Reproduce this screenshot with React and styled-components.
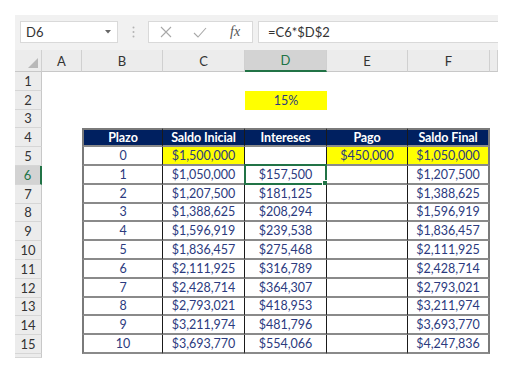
import React from 'react';
import styled, { createGlobalStyle } from 'styled-components';

const Global = createGlobalStyle`
  body {
    margin: 0;
    background: #fff;
    font-family: Lato, "Liberation Sans", sans-serif;
  }
`

const Page = styled.div`
  padding: 15px 0 0 15px;
  width: 483px;
`

const Toolbar = styled.div`
  display: flex;
  align-items: flex-start;
  height: 35px;
  box-sizing: border-box;
  padding: 6px 0 0 5px;
  background: #f1f1f1;
`

const NameBox = styled.div`
  width: 98px;
  height: 22px;
  box-sizing: border-box;
  display: flex;
  align-items: center;
  justify-content: space-between;
  padding: 0 6px 0 5px;
  background: #fff;
  border: 1px solid #d9d9d9;
  font-size: 13px;
  color: #333;
`

const Grip = styled.div`
  width: 30px;
  height: 22px;
  display: flex;
  align-items: center;
  justify-content: center;
`

const FxBox = styled.div`
  width: 105px;
  height: 22px;
  box-sizing: border-box;
  display: flex;
  align-items: center;
  padding-left: 11px;
  gap: 21px;
  background: #fff;
  border: 1px solid #d9d9d9;
`

const Fx = styled.span`
  font-family: "Liberation Serif", serif;
  font-style: italic;
  font-size: 14px;
  color: #555;
  margin-left: 2px;
`

const Formula = styled.div`
  flex-grow: 1;
  margin-left: 5px;
  height: 22px;
  box-sizing: border-box;
  display: flex;
  align-items: center;
  padding-left: 9px;
  background: #fff;
  border: 1px solid #d9d9d9;
  border-right: none;
  font-size: 13px;
  color: #333;
`

const Sheet = styled.div`
  display: grid;
  grid-template-columns: 27px 40px 81px 82px 82px 81px 82px 8px;
  grid-template-rows: 22px repeat(15, 18.8px) 4px;
  font-size: 12.5px;
`

const Corner = styled.div`
  background: #ececec;
  border-right: 1px solid #d0d0d0;
  border-bottom: 1px solid #c8c8c8;
  display: flex;
  align-items: flex-end;
  justify-content: flex-end;
  padding: 0 3px 3px 0;
`

const ColHead = styled.div`
  display: flex;
  align-items: center;
  justify-content: center;
  box-sizing: border-box;
  background: ${p => (p.$active ? '#d3d3d3' : '#ececec')};
  color: ${p => (p.$active ? '#217346' : '#333')};
  border-right: 1px solid #d0d0d0;
  border-bottom: ${p => (p.$active ? '2px solid #217346' : '1px solid #c8c8c8')};
  font-size: 13px;
`

const RowHead = styled.div`
  display: flex;
  align-items: center;
  justify-content: center;
  box-sizing: border-box;
  background: ${p => (p.$active ? '#d3d3d3' : '#ececec')};
  color: ${p => (p.$active ? '#217346' : '#333')};
  border-right: ${p => (p.$active ? '2px solid #217346' : '1px solid #c8c8c8')};
  border-bottom: 1px solid #d6d6d6;
  font-size: 13px;
`

const Blank = styled.div`
  display: flex;
  align-items: center;
  justify-content: center;
  background: ${p => p.$bg || '#fff'};
  color: #2b3a7e;
`

const TCell = styled.div`
  position: relative;
  display: flex;
  align-items: center;
  justify-content: center;
  box-sizing: border-box;
  background: ${p => (p.$head ? '#002060' : p.$yellow ? '#ffff00' : '#fff')};
  color: ${p => (p.$head ? '#fff' : '#2b3a7e')};
  font-weight: ${p => (p.$head ? 700 : 400)};
  letter-spacing: ${p => (p.$head ? '-0.1px' : '0')};
  border-right: 1px solid ${p => (p.$last ? '#7a7a7a' : '#1a1a1a')};
  border-bottom: 2px solid #8a8a8a;
  border-left: ${p => (p.$first ? '2px solid #7a7a7a' : 'none')};
  border-top: ${p => (p.$head ? '2px solid #7a7a7a' : 'none')};
  ${p => p.$last && 'border-right-width: 2px;'}
`

const Selection = styled.div`
  position: absolute;
  left: -1px;
  top: -2px;
  right: -1px;
  bottom: -2px;
  border: 2px solid #217346;
`

const Handle = styled.div`
  position: absolute;
  right: -4px;
  bottom: -4px;
  width: 5px;
  height: 5px;
  background: #217346;
  border: 1px solid #fff;
`

const headers = ['Plazo', 'Saldo Inicial', 'Intereses', 'Pago', 'Saldo Final'];

const data = [
  ['0', '$1,500,000', '', '$450,000', '$1,050,000'],
  ['1', '$1,050,000', '$157,500', '', '$1,207,500'],
  ['2', '$1,207,500', '$181,125', '', '$1,388,625'],
  ['3', '$1,388,625', '$208,294', '', '$1,596,919'],
  ['4', '$1,596,919', '$239,538', '', '$1,836,457'],
  ['5', '$1,836,457', '$275,468', '', '$2,111,925'],
  ['6', '$2,111,925', '$316,789', '', '$2,428,714'],
  ['7', '$2,428,714', '$364,307', '', '$2,793,021'],
  ['8', '$2,793,021', '$418,953', '', '$3,211,974'],
  ['9', '$3,211,974', '$481,796', '', '$3,693,770'],
  ['10', '$3,693,770', '$554,066', '', '$4,247,836'],
];

const yellowRow0 = [false, true, false, true, true];

function renderRow(r) {
  const cells = [<RowHead key="h" $active={r === 6}>{r}</RowHead>, <Blank key="a" />];
  if (r === 2) {
    cells.push(<Blank key="b" />, <Blank key="c" />, <Blank key="d" $bg="#ffff00">15%</Blank>, <Blank key="e" />, <Blank key="f" />);
  } else if (r === 4) {
    headers.forEach((h, i) => cells.push(
      <TCell key={h} $head $first={i === 0} $last={i === 4}>{h}</TCell>
    ));
  } else if (r >= 5) {
    data[r - 5].forEach((v, i) => cells.push(
      <TCell key={i} $first={i === 0} $last={i === 4} $yellow={r === 5 && yellowRow0[i]}>
        {v}
        {r === 6 && i === 2 && (
          <Selection>
            <Handle />
          </Selection>
        )}
      </TCell>
    ));
  } else {
    ['b', 'c', 'd', 'e', 'f'].forEach(k => cells.push(<Blank key={k} />));
  }
  cells.push(<Blank key="g" />);
  return cells;
}

export default function App() {
  const rows = Array.from({ length: 15 }, (_, i) => i + 1);
  return (
    <Page>
      <Global />
      <Toolbar>
        <NameBox>
          <span>D6</span>
          <svg width="6" height="4" viewBox="0 0 6 4"><path d="M0 0h6L3 3.5z" fill="#666" /></svg>
        </NameBox>
        <Grip>
          <svg width="3" height="12" viewBox="0 0 3 12">
            <circle cx="1.5" cy="1.5" r="1" fill="#b3b3b3" />
            <circle cx="1.5" cy="6" r="1" fill="#b3b3b3" />
            <circle cx="1.5" cy="10.5" r="1" fill="#b3b3b3" />
          </svg>
        </Grip>
        <FxBox>
          <svg width="12" height="12" viewBox="0 0 12 12">
            <path d="M1 1l10 10M11 1L1 11" stroke="#a8a8a8" strokeWidth="1.1" fill="none" />
          </svg>
          <svg width="14" height="11" viewBox="0 0 14 11">
            <path d="M1 6l4 4 8-9" stroke="#a8a8a8" strokeWidth="1.1" fill="none" />
          </svg>
          <Fx>fx</Fx>
        </FxBox>
        <Formula>=C6*$D$2</Formula>
      </Toolbar>
      <Sheet>
        <Corner>
          <svg width="10" height="10" viewBox="0 0 10 10"><path d="M10 0v10H0z" fill="#b8b8b8" /></svg>
        </Corner>
        {['A', 'B', 'C', 'D', 'E', 'F', ''].map((c, i) => (
          <ColHead key={i} $active={c === 'D'}>{c}</ColHead>
        ))}
        {rows.map(r => renderRow(r))}
        <RowHead />
      </Sheet>
    </Page>
  );
}
